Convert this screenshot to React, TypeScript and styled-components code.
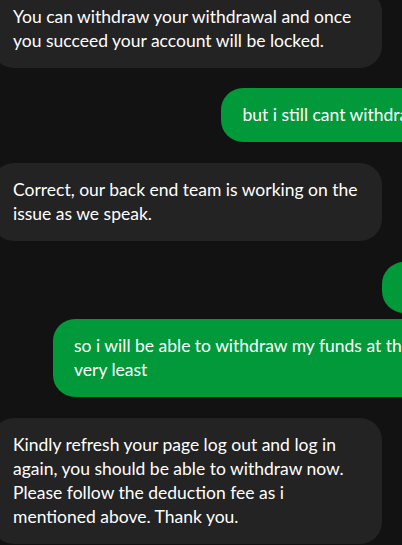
import styled, { createGlobalStyle } from 'styled-components';

type Side = 'in' | 'out';

interface Message {
	id: number;
	side: Side;
	text: string;
	gap: number;
	compact?: boolean;
}

const messages: Message[] = [
	{ id: 1, side: 'in', gap: 0, text: 'You can withdraw your withdrawal and once you succeed your account will be locked.' },
	{ id: 2, side: 'out', gap: 20, text: 'but i still cant withdraw' },
	{ id: 3, side: 'in', gap: 21, text: 'Correct, our back end team is working on the issue as we speak.' },
	{ id: 4, side: 'out', gap: 21, text: 'ok', compact: true },
	{ id: 5, side: 'out', gap: 6, text: 'so i will be able to withdraw my funds at the very least' },
	{
		id: 6,
		side: 'in',
		gap: 21,
		text: 'Kindly refresh your page log out and log in again, you should be able to withdraw now. Please follow the deduction fee as i mentioned above. Thank you.',
	},
];

const GlobalStyle = createGlobalStyle`
	html, body {
		margin: 0;
		padding: 0;
		background: #121212;
	}
	* {
		box-sizing: border-box;
	}
`;

const Screen = styled.div`
	width: 402px;
	height: 545px;
	overflow: hidden;
	background: #121212;
`;

const Thread = styled.div`
	display: flex;
	flex-direction: column;
	width: 451px;
	margin: -10px 0 0 -8px;
`;

const Row = styled.div<{ $side: Side; $gap: number }>`
	display: flex;
	justify-content: ${(p) => (p.$side === 'out' ? 'flex-end' : 'flex-start')};
	margin-top: ${(p) => p.$gap}px;
`;

const Bubble = styled.div<{ $side: Side; $compact?: boolean }>`
	max-width: 390px;
	padding: ${(p) => (p.$compact ? '13.5px 21px' : '15px 21px')};
	border-radius: 22px;
	background: ${(p) => (p.$side === 'out' ? '#02993a' : '#232323')};
	color: #ffffff;
	font-family: Lato, 'Liberation Sans', sans-serif;
	font-size: 17.5px;
	line-height: 24px;
	white-space: pre-wrap;
`;

export default function App() {
	return (
		<>
			<GlobalStyle />
			<Screen>
				<Thread>
					{messages.map((m) => (
						<Row key={m.id} $side={m.side} $gap={m.gap}>
							<Bubble $side={m.side} $compact={m.compact}>
								{m.text}
							</Bubble>
						</Row>
					))}
				</Thread>
			</Screen>
		</>
	);
}
